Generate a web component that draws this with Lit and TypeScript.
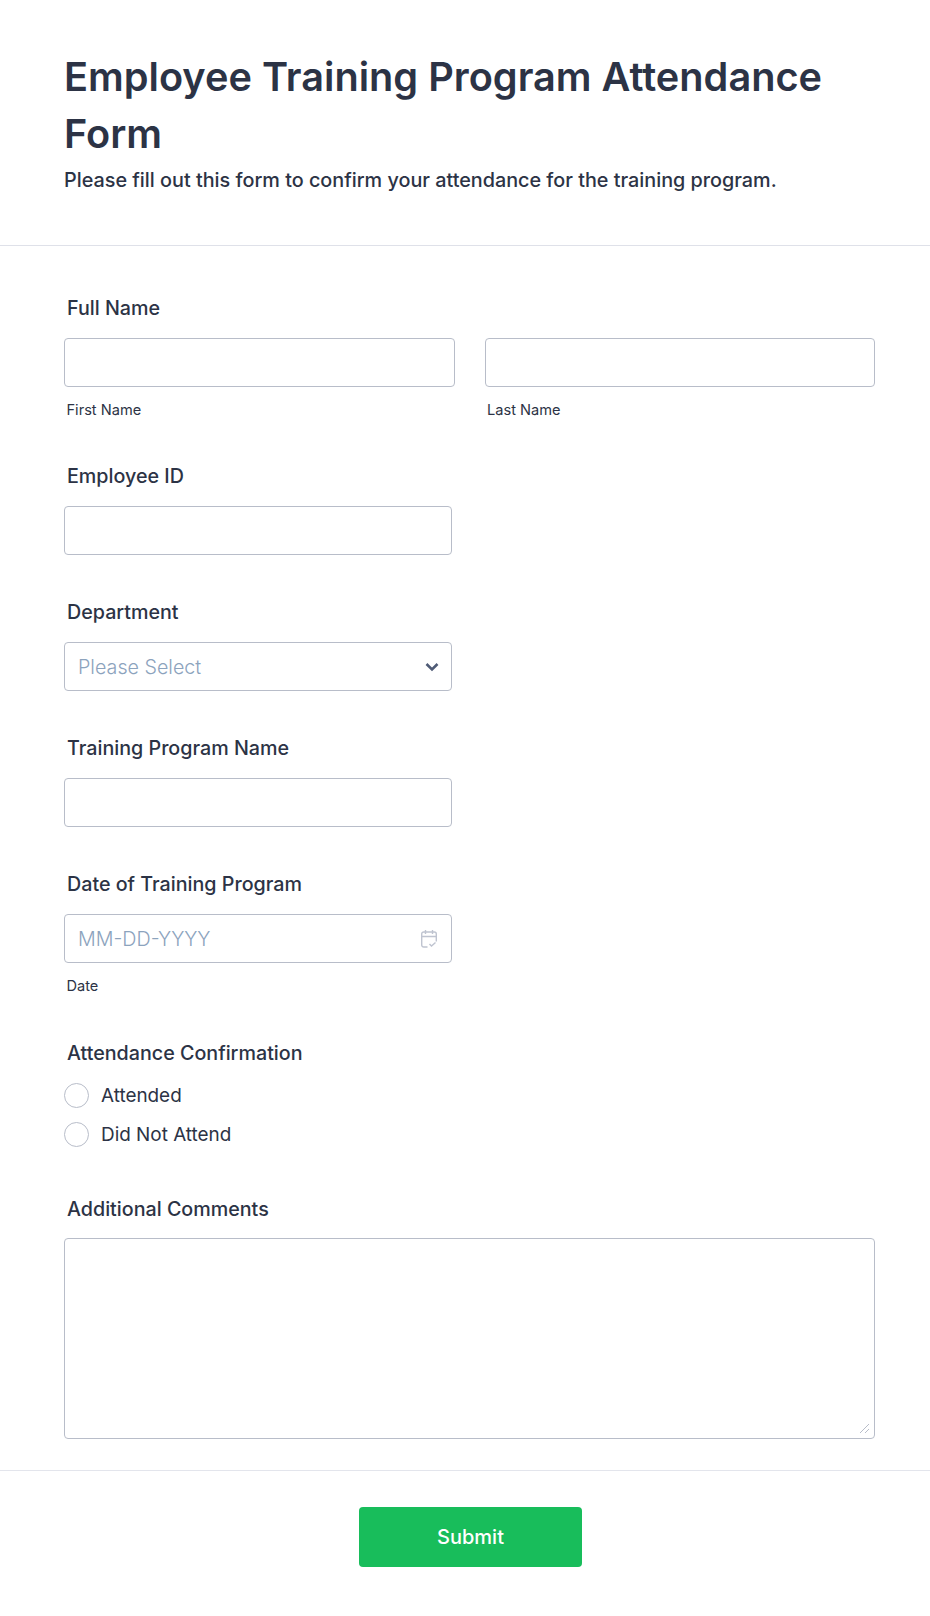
import { LitElement, html, css } from "lit";
import { customElement } from "lit/decorators.js";

@customElement("app-root")
export class AppRoot extends LitElement {
  static styles = css`
    :host { display: block; background: #fff; height: 1616px; font-family: Inter, "Liberation Sans", sans-serif; color: #2c3345; }
    * { box-sizing: border-box; }
    .header { height: 246px; padding: 49px 64px 0; border-bottom: 1px solid #dfe1e9; }
    h1 { margin: 0; font-size: 39.7px; line-height: 57px; font-weight: 600; }
    .sub { font-size: 19.8px; line-height: 30px; font-weight: 500; margin-top: 2px; }
    form { display: flex; flex-direction: column; padding: 50px 55px 0 64px; }
    .field { display: flex; flex-direction: column; }
    .label { font-size: 19.7px; line-height: 24px; font-weight: 500; padding-left: 3px; margin-bottom: 18px; }
    .tight { margin-bottom: 17px; }
    .row { display: grid; grid-template-columns: 390.5px 390.5px; gap: 30px; }
    .box { height: 49px; border: 1px solid #b8bdc9; border-radius: 4px; background: #fff; display: flex; align-items: center; justify-content: space-between; padding: 0 13px; font-size: 19.7px; font-weight: 350; color: #8ca3bd; }
    .half { width: 388px; }
    .chev { margin-right: -1px; }
    .cal { margin-right: 1px; }
    .subl { font-size: 14.6px; line-height: 18px; padding: 14px 0 0 2.5px; color: #2c3345; }
    .gap-a { margin-top: 45px; }
    .gap-b { margin-top: 45px; }
    .gap-c { margin-top: 46px; }
    .gap-d { margin-top: 50px; }
    .radios { display: flex; flex-direction: column; gap: 14px; }
    .radio { display: flex; align-items: center; gap: 12px; font-size: 18.9px; line-height: 25px; height: 25px; }
    .circle { width: 25px; height: 25px; border: 1px solid #b8bdc9; border-radius: 50%; }
    .area { position: relative; height: 201px; width: 811px; border: 1px solid #b8bdc9; border-radius: 4px; }
    .grip { position: absolute; right: 4px; bottom: 4px; }
    .footer { margin-top: 31px; border-top: 1px solid #e3e5ec; display: flex; justify-content: center; padding-top: 36px; }
    .submit { width: 223px; height: 60px; border: 0; border-radius: 4px; background: #18bd5b; color: #fff; font: 500 20px Inter, "Liberation Sans", sans-serif; margin-left: 11px; }
    svg { display: block; }
  `;

  render() {
    return html`
      <div class="header">
        <h1>Employee Training Program Attendance Form</h1>
        <div class="sub">Please fill out this form to confirm your attendance for the training program.</div>
      </div>
      <form>
        <div class="field">
          <div class="label">Full Name</div>
          <div class="row">
            <div><div class="box"></div><div class="subl">First Name</div></div>
            <div><div class="box"></div><div class="subl">Last Name</div></div>
          </div>
        </div>
        <div class="field gap-a">
          <div class="label">Employee ID</div>
          <div class="box half"></div>
        </div>
        <div class="field gap-b">
          <div class="label">Department</div>
          <div class="box half">
            <span>Please Select</span>
            <svg class="chev" width="14" height="10" viewBox="0 0 14 10" fill="none"><path d="M1.5 2 7 7.5 12.5 2" stroke="#4f5b76" stroke-width="2.6"/></svg>
          </div>
        </div>
        <div class="field gap-b">
          <div class="label">Training Program Name</div>
          <div class="box half"></div>
        </div>
        <div class="field gap-b">
          <div class="label">Date of Training Program</div>
          <div class="box half">
            <span>MM-DD-YYYY</span>
            <svg class="cal" width="16" height="19" viewBox="0 0 16 19" fill="none" stroke="#bfc4d0" stroke-width="1.4"><path d="M6.5 18H2.7a2 2 0 0 1-2-2V5a2 2 0 0 1 2-2h10.6a2 2 0 0 1 2 2v7.5M.7 7.5h14.6M4.5 1v4M11.5 1v4M8.5 15l2 2 4-3.5"/></svg>
          </div>
          <div class="subl">Date</div>
        </div>
        <div class="field gap-c">
          <div class="label">Attendance Confirmation</div>
          <div class="radios">
            <div class="radio"><span class="circle"></span>Attended</div>
            <div class="radio"><span class="circle"></span>Did Not Attend</div>
          </div>
        </div>
        <div class="field gap-d">
          <div class="label tight">Additional Comments</div>
          <div class="area">
            <svg class="grip" width="11" height="11" viewBox="0 0 11 11" stroke="#b8bdc9" fill="none"><path d="M1 10 10 1M6 10l4-4"/></svg>
          </div>
        </div>
      </form>
      <div class="footer"><button class="submit">Submit</button></div>
    `;
  }
}
